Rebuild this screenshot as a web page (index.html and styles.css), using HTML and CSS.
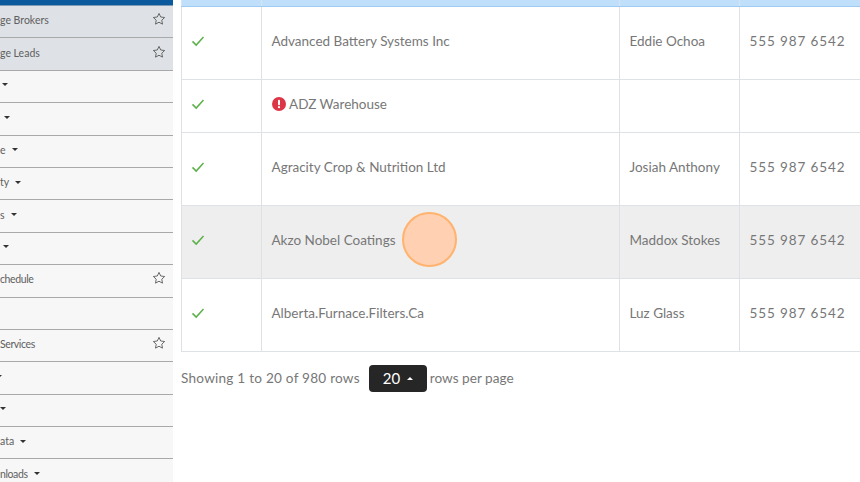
FILE: index.html
```html
<!DOCTYPE html>
<html lang="en">
<head>
<meta charset="utf-8">
<title>Customers</title>
<link rel="stylesheet" href="styles.css">
</head>
<body>
<svg class="defs" width="0" height="0" aria-hidden="true">
  <symbol id="star" viewBox="0 0 16 16"><path d="M8 1.6l1.95 4.1 4.5.6-3.28 3.1.82 4.46L8 11.7l-3.99 2.16.82-4.46L1.55 6.3l4.5-.6z" fill="none" stroke="#555" stroke-width="1" stroke-linejoin="round"/></symbol>
  <symbol id="check" viewBox="0 0 14 12"><path d="M1.5 6.4l3.7 3.7 7.3-8" fill="none" stroke="#5cb04a" stroke-width="1.5"/></symbol>
</svg>
<div class="page">
  <nav class="sidebar">
    <div class="sidebar-top"></div>
    <a class="item active">ge Brokers<svg class="star"><use href="#star"/></svg></a>
    <a class="item active">ge Leads<svg class="star"><use href="#star"/></svg></a>
    <a class="item"><i class="caret c2"></i></a>
    <a class="item"><i class="caret c4"></i></a>
    <a class="item">e<i class="caret"></i></a>
    <a class="item">ty<i class="caret"></i></a>
    <a class="item">s<i class="caret"></i></a>
    <a class="item"><i class="caret c3"></i></a>
    <a class="item tight">chedule<svg class="star"><use href="#star"/></svg></a>
    <a class="item"></a>
    <a class="item tight">Services<svg class="star"><use href="#star"/></svg></a>
    <a class="item"><i class="caret cn"></i></a>
    <a class="item"><i class="caret c0"></i></a>
    <a class="item">ata<i class="caret"></i></a>
    <a class="item tight">nloads<i class="caret"></i></a>
  </nav>
  <main class="content">
    <table class="grid">
      <colgroup><col class="col-a"><col class="col-b"><col class="col-c"><col class="col-d"></colgroup>
      <thead><tr><th></th><th></th><th></th><th></th></tr></thead>
      <tbody>
        <tr><td><svg class="check"><use href="#check"/></svg></td><td>Advanced Battery Systems Inc</td><td>Eddie Ochoa</td><td class="phone">555 987 6542</td></tr>
        <tr class="short"><td><svg class="check"><use href="#check"/></svg></td><td><svg class="alert" viewBox="0 0 14 14"><circle cx="7" cy="7" r="7" fill="#dc3545"/><rect x="6" y="2.8" width="2" height="5.4" rx="1" fill="#fff"/><circle cx="7" cy="10.2" r="1.1" fill="#fff"/></svg>ADZ Warehouse</td><td></td><td></td></tr>
        <tr><td><svg class="check"><use href="#check"/></svg></td><td>Agracity Crop &amp; Nutrition Ltd</td><td>Josiah Anthony</td><td class="phone">555 987 6542</td></tr>
        <tr class="hover"><td><svg class="check"><use href="#check"/></svg></td><td>Akzo Nobel Coatings</td><td>Maddox Stokes</td><td class="phone">555 987 6542</td></tr>
        <tr><td><svg class="check"><use href="#check"/></svg></td><td>Alberta.Furnace.Filters.Ca</td><td>Luz Glass</td><td class="phone">555 987 6542</td></tr>
      </tbody>
    </table>
    <div class="pager">
      <span class="showing">Showing 1 to 20 of 980 rows</span>
      <button class="size">20<i class="up"></i></button>
      <span class="per">rows per page</span>
    </div>
  </main>
</div>
<div class="spot"></div>
</body>
</html>
```
FILE: styles.css
```css
* { box-sizing: border-box; }
html, body { margin: 0; height: 100%; overflow: hidden; background: #fff; }
body { font-family: Lato, "Open Sans", sans-serif; color: #777; }
.defs { position: absolute; }
.page { display: flex; height: 482px; width: 860px; overflow: hidden; }

.sidebar { flex: 0 0 173px; background: #f7f7f7; overflow: hidden; }
.sidebar-top { height: 6px; background: #0b5a9e; border-bottom: 1px solid #7d9ab5; }
.item { display: flex; align-items: center; height: 32.4px; padding-bottom: 3px; border-bottom: 1px solid #a9a9a9; font-size: 10.5px; color: #606060; white-space: nowrap; padding-right: 7px; }
.item.active { background: #dee2e6; }
.item.tight { letter-spacing: -0.4px; }
.star { width: 14px; height: 14px; margin-left: auto; margin-top: -2px; }
.caret { width: 0; height: 0; margin-left: 6px; border: 3px solid transparent; border-top: 3.5px solid #333; border-bottom: 0; }
.caret.c0 { margin-left: 0; }
.caret.c2 { margin-left: 2px; }
.caret.c3 { margin-left: 3px; }
.caret.c4 { margin-left: 4px; }
.caret.cn { margin-left: -4px; }

.content { flex: 1 0 0; padding-left: 8px; min-width: 0; overflow: hidden; }
.grid { border-collapse: collapse; table-layout: fixed; width: 699px; font-size: 13.5px; }
.col-a { width: 79.5px; }
.col-b { width: 358px; }
.col-c { width: 120px; }
.col-d { width: 141.5px; }
.grid th { height: 6px; padding: 0; background: #bfdffb; border: 1px solid #d4e4f2; border-top: 0; border-bottom: 1px solid #9fcbf2; }
.grid td { height: 73px; padding: 0 10px 4px; border: 1px solid #dee2e6; vertical-align: middle; }
.grid tr.short td { height: 53px; }
.grid tr.hover td { background: #eeeeee; }
.phone { letter-spacing: 0.9px; }
.check { width: 14px; height: 12px; display: block; margin-left: -1px; }
.alert { width: 14px; height: 14px; margin-right: 3.5px; vertical-align: -2px; }

.pager { display: flex; align-items: center; margin-top: 13px; font-size: 13.6px; }
.showing { letter-spacing: 0.23px; }
.per { margin-left: 3px; }
.size { display: flex; align-items: center; height: 27px; width: 58px; margin-left: 9px; padding: 0 0 0 14px; background: #262626; color: #fff; border: 0; border-radius: 4px; font: inherit; font-size: 15px; }
.up { width: 0; height: 0; margin-left: 7px; border: 3px solid transparent; border-bottom: 3.5px solid #fff; border-top: 0; }

.spot { position: absolute; left: 402px; top: 212px; width: 55px; height: 55px; border-radius: 50%; background: #ffd0b2; border: 2px solid #ffb36e; }
```
